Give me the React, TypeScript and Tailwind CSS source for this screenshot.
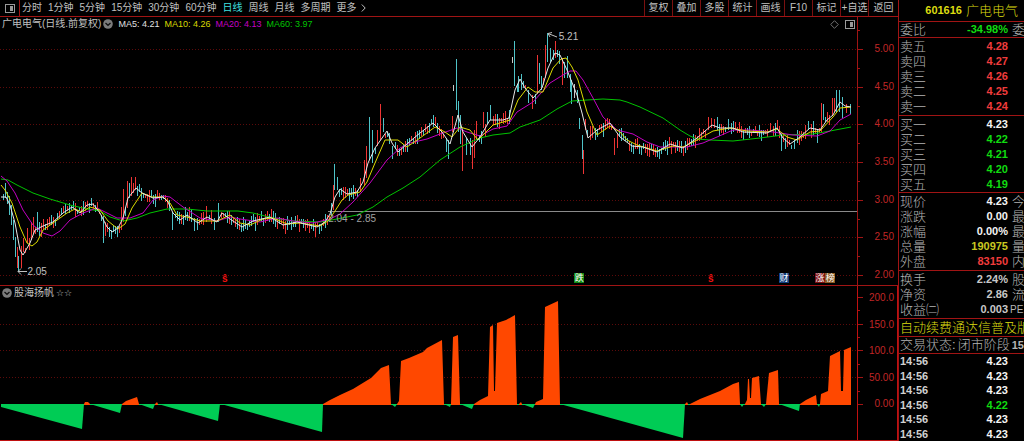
import React from "react";
import { clsx } from "clsx";

type Point = [number, number];
type Tone = "up" | "down" | "flat";

const PLOT_WIDTH = 857;

const ma5: Point[] = [
  [1, 197], [6, 197], [10, 205], [15, 223], [20, 250], [23, 255], [30, 243], [35, 230], [43, 226], [53, 222],
  [63, 213], [72, 207], [80, 213], [87, 205], [93, 204], [100, 213], [107, 227], [112, 232], [118, 228],
  [123, 218], [128, 198], [136, 188], [142, 193], [153, 198], [163, 197], [168, 202], [173, 213], [180, 220],
  [187, 215], [198, 223], [207, 217], [217, 222], [222, 213], [230, 219], [242, 227], [253, 221], [270, 217],
  [283, 225], [297, 222], [317, 227], [325, 222], [330, 214], [335, 197], [340, 189], [347, 194], [357, 192], [363, 182],
  [368, 163], [375, 148], [387, 131], [392, 143], [398, 152], [408, 143], [420, 133], [433, 123], [442, 132],
  [450, 144], [458, 115], [463, 132], [472, 147], [480, 137], [490, 120], [503, 120], [509, 118], [515, 90],
  [520, 79], [525, 88], [533, 98], [542, 88], [548, 68], [555, 53], [560, 55], [567, 70], [577, 95], [582, 113],
  [588, 138], [597, 130], [610, 123], [620, 137], [632, 146], [643, 147], [657, 152], [670, 144], [683, 148],
  [697, 138], [712, 125], [720, 128], [733, 128], [743, 132], [767, 133], [777, 128], [783, 138], [790, 144],
  [800, 137], [810, 128], [820, 130], [827, 120], [833, 115], [840, 102], [845, 106], [851, 107],
];

const ma10: Point[] = [
  [1, 185], [5, 190], [12, 203], [20, 227], [27, 243], [32, 246], [37, 242], [43, 230], [53, 223], [67, 213],
  [75, 209], [82, 212], [90, 207], [100, 210], [108, 221], [118, 229], [125, 224], [132, 208], [142, 193],
  [152, 197], [163, 197], [170, 203], [177, 215], [187, 217], [200, 221], [217, 221], [230, 215], [240, 223],
  [250, 225], [263, 219], [273, 218], [287, 224], [300, 223], [320, 226], [328, 221], [335, 211], [342, 200],
  [348, 195], [360, 192], [367, 182], [375, 163], [385, 140], [398, 140], [407, 147], [420, 138], [435, 127],
  [445, 132], [452, 137], [460, 127], [470, 130], [478, 140], [493, 125], [510, 120], [518, 100], [528, 87],
  [535, 92], [543, 92], [553, 68], [561, 59], [566, 58], [572, 67], [578, 80], [587, 112], [597, 135], [610, 126],
  [620, 132], [627, 140], [637, 145], [657, 151], [673, 146], [683, 147], [697, 140], [713, 131], [730, 128],
  [747, 131], [767, 132], [777, 129], [787, 137], [797, 140], [810, 132], [820, 131], [833, 117], [840, 108],
  [851, 107],
];

const ma20: Point[] = [
  [1, 176], [7, 181], [15, 193], [23, 210], [33, 225], [43, 233], [52, 236], [60, 231], [70, 220], [83, 213],
  [97, 208], [107, 213], [117, 218], [130, 218], [143, 213], [153, 200], [163, 196], [170, 197], [183, 207],
  [200, 218], [217, 221], [230, 217], [240, 219], [260, 222], [277, 218], [293, 221], [313, 223], [330, 219],
  [340, 214], [353, 202], [370, 183], [387, 160], [400, 148], [410, 143], [427, 139], [440, 134], [457, 128],
  [467, 132], [480, 136], [493, 129], [507, 126], [517, 112], [533, 102], [550, 83], [563, 75], [570, 71],
  [576, 71], [583, 80], [593, 98], [603, 117], [617, 130], [633, 134], [647, 142], [660, 147], [687, 147],
  [703, 143], [717, 137], [733, 130], [750, 130], [773, 132], [793, 135], [817, 136], [830, 131], [840, 120],
  [851, 114],
];

const ma60: Point[] = [
  [1, 179], [8, 180], [17, 185], [33, 193], [50, 199], [70, 205], [87, 209], [100, 211], [110, 217], [123, 221],
  [137, 218], [150, 213], [167, 209], [187, 209], [207, 211], [238, 211], [253, 213], [273, 218], [293, 221],
  [320, 222], [337, 219], [357, 215], [373, 207], [387, 197], [403, 188], [420, 177], [440, 160], [460, 147],
  [480, 138], [493, 135], [510, 133], [520, 127], [540, 120], [557, 109], [572, 101], [587, 100], [603, 99], [620, 100],
  [627, 102], [640, 107], [663, 118], [680, 130], [690, 136], [697, 139], [710, 140], [733, 141], [760, 138], [783, 135],
  [813, 134], [830, 131], [851, 127],
];

const majorBars: [number, number, number, Tone][] = [
  [5, 183, 198, "down"], [7, 192, 204, "down"], [9, 196, 215, "down"], [11, 205, 225, "down"], [13, 220, 240, "down"],
  [15, 237, 257, "down"], [17, 247, 268, "up"], [18, 256, 271, "down"], [21, 246, 268, "up"], [23, 238, 252, "up"],
  [27, 228, 243, "up"], [31, 222, 240, "up"], [33, 217, 234, "up"], [37, 212, 232, "down"], [39, 222, 236, "down"],
  [103, 216, 243, "down"], [105, 222, 236, "up"], [111, 230, 239, "down"], [121, 207, 230, "up"],
  [123, 189, 222, "up"], [127, 181, 208, "up"], [129, 183, 198, "down"], [131, 177, 196, "up"],
  [135, 177, 190, "up"], [157, 190, 198, "up"], [172, 212, 230, "down"], [194, 218, 231, "down"], [206, 206, 222, "up"],
  [218, 203, 222, "down"], [214, 218, 230, "down"], [333, 185, 210, "up"], [334, 164, 190, "down"], [337, 177, 190, "down"],
  [360, 178, 192, "up"], [364, 160, 185, "up"], [366, 146, 178, "up"], [369, 117, 160, "down"], [372, 130, 163, "down"],
  [377, 130, 146, "up"], [380, 104, 140, "up"], [383, 118, 132, "down"], [392, 146, 159, "down"], [446, 138, 152, "down"],
  [448, 140, 159, "down"], [452, 116, 132, "up"], [453, 85, 91, "flat"], [456, 59, 110, "down"], [458, 101, 132, "down"],
  [460, 115, 144, "down"], [462, 130, 171, "up"], [466, 138, 155, "down"], [470, 138, 155, "down"], [472, 140, 169, "up"],
  [474, 130, 158, "up"], [476, 121, 140, "up"], [483, 112, 128, "up"], [487, 112, 124, "down"], [490, 105, 120, "down"],
  [512, 57, 63, "flat"], [514, 41, 86, "down"], [517, 84, 92, "down"], [518, 76, 92, "down"], [521, 74, 90, "down"],
  [528, 90, 103, "down"], [532, 95, 109, "up"], [537, 55, 94, "up"], [539, 63, 84, "down"], [541, 76, 90, "down"],
  [545, 45, 78, "up"], [547, 33, 62, "down"], [550, 48, 62, "down"], [553, 50, 60, "down"], [555, 41, 58, "up"],
  [562, 58, 85, "up"], [564, 62, 78, "down"], [567, 56, 78, "down"], [570, 74, 92, "down"], [571, 80, 104, "down"],
  [574, 84, 98, "flat"], [579, 118, 129, "down"], [582, 135, 159, "down"], [583, 150, 174, "up"],
  [590, 126, 140, "up"], [592, 126, 138, "up"], [595, 128, 140, "down"], [614, 138, 155, "up"], [617, 134, 148, "up"],
  [641, 146, 155, "down"], [655, 148, 157, "up"], [683, 146, 156, "up"],
  [708, 117, 130, "up"], [714, 119, 128, "up"], [728, 119, 130, "down"], [770, 123, 132, "up"], [781, 134, 151, "down"],
  [785, 138, 149, "down"], [794, 140, 149, "down"], [808, 121, 130, "down"], [817, 130, 143, "down"], [821, 103, 132, "up"],
  [823, 104, 120, "down"], [827, 112, 122, "up"], [832, 98, 116, "up"], [834, 98, 112, "up"], [836, 90, 112, "down"],
  [839, 90, 112, "down"], [842, 97, 118, "down"], [846, 104, 113, "up"], [850, 104, 114, "down"],
];

const risingAreas: Point[][] = [
  [[84, 404], [85, 402], [88, 402], [90, 404]],
  [[122, 404], [126, 401], [137, 397], [139, 404]],
  [[155, 404], [157, 402], [158, 404]],
  [[323, 404], [330, 400], [340, 395], [353, 389], [371, 378], [381, 368], [389, 365], [391, 404]],
  [[397, 404], [399, 401], [401, 361], [409, 358], [423, 352], [427, 348], [442, 340], [444, 404]],
  [[451, 404], [453, 337], [458, 335], [460, 404]],
  [[474, 404], [480, 400], [488, 396], [490, 327], [493, 325], [494, 391], [495, 391], [497, 323], [506, 320], [515, 315], [517, 404]],
  [[519, 404], [521, 402], [522, 404]],
  [[535, 404], [536, 402], [543, 399], [545, 307], [558, 301], [560, 404]],
  [[685, 404], [687, 402], [688, 404]],
  [[690, 404], [700, 399], [720, 391], [733, 384], [739, 382], [740, 404]],
  [[745, 404], [747, 400], [748, 379], [749, 379], [750, 398], [751, 398], [752, 378], [759, 376], [761, 404]],
  [[766, 404], [769, 373], [778, 370], [779, 404]],
  [[800, 404], [806, 400], [816, 395], [817, 404]],
  [[820, 404], [821, 394], [828, 391], [830, 356], [840, 351], [841, 391], [843, 391], [844, 350], [851, 347], [851, 404]],
];

const fallingAreas: Point[][] = [
  [[1, 404], [1, 407], [82, 429], [84, 404]],
  [[90, 404], [120, 413], [122, 404]],
  [[139, 404], [153, 409], [155, 404]],
  [[158, 404], [218, 421], [220, 404]],
  [[221, 404], [322, 432], [323, 404]],
  [[391, 404], [395, 407], [397, 404]],
  [[444, 404], [450, 407], [451, 404]],
  [[460, 404], [472, 409], [474, 404]],
  [[522, 404], [533, 408], [535, 404]],
  [[560, 404], [683, 438], [685, 404]],
  [[740, 404], [742, 407], [744, 404]],
  [[761, 404], [764, 407], [766, 404]],
  [[779, 404], [799, 411], [800, 404]],
  [[817, 404], [819, 407], [820, 404]],
];

const toneColor: Record<Tone, string> = { up: "#ee3434", down: "#4fc3c8", flat: "#c8c8c8" };

const toPath = (points: Point[]) => points.map((p) => p.join(",")).join(" ");

function valueAt(points: Point[], x: number) {
  const i = Math.max(1, points.findIndex((p) => p[0] >= x));
  const [x0, y0] = points[i - 1];
  const [x1, y1] = points[i];
  return y0 + ((y1 - y0) * (x - x0)) / (x1 - x0);
}

function noise(n: number) {
  const v = Math.sin(n * 12.9898) * 43758.5453;
  return v - Math.floor(v);
}

function minorBars() {
  const bars: [number, number, number, Tone][] = [];
  for (let x = 3; x < 850; x += 2) {
    if (majorBars.some((b) => Math.abs(b[0] - x) < 2)) continue;
    const mid = valueAt(ma5, x) + (noise(x) - 0.5) * 7;
    const half = 2 + noise(x + 900) * 5;
    bars.push([x, Math.round(mid - half), Math.round(mid + half), noise(x + 77) > 0.5 ? "down" : "up"]);
  }
  return bars;
}

const bars = [...minorBars(), ...majorBars];

function GridLine({ y }: { y: number }) {
  return <line x1={0} x2={PLOT_WIDTH} y1={y + 0.5} y2={y + 0.5} stroke="#5c0a0a" strokeDasharray="1 2" />;
}

function PriceChart() {
  return (
    <svg viewBox="0 31 857 254" preserveAspectRatio="none" className="block h-[254px] w-full" aria-hidden="true">
      {[49, 87, 124, 162, 200, 237, 275].map((y) => (
        <GridLine key={y} y={y} />
      ))}
      <g shapeRendering="crispEdges">
        {bars.map(([x, top, bottom, tone]) => (
          <rect key={`${x}-${top}`} x={x} y={top} width={1} height={bottom - top} fill={toneColor[tone]} />
        ))}
      </g>
      <line x1={328} x2={PLOT_WIDTH} y1={211.5} y2={211.5} stroke="#8a8a8a" />
      <g fill="none" strokeWidth={1} strokeLinejoin="round">
        <polyline points={toPath(ma60)} stroke="#00c400" />
        <polyline points={toPath(ma20)} stroke="#c400c4" />
        <polyline points={toPath(ma10)} stroke="#dcdc00" />
        <polyline points={toPath(ma5)} stroke="#e8e8e8" />
      </g>
      <g fill="none" stroke="#c0c0c0">
        <path d="M27 271.5H18M21 268.5L18 271.5L21 274.5" />
        <path d="M557 37L548 33.5M552 32.5L548 33.5L550 37" />
      </g>
    </svg>
  );
}

function IndicatorChart() {
  return (
    <svg viewBox="0 300 857 140" preserveAspectRatio="none" className="block h-[140px] w-full" aria-hidden="true">
      {[324, 350, 377].map((y) => (
        <GridLine key={y} y={y} />
      ))}
      {fallingAreas.map((a) => (
        <polygon key={a[0][0]} points={toPath(a)} fill="#00cc55" />
      ))}
      {risingAreas.map((a) => (
        <polygon key={a[0][0]} points={toPath(a)} fill="#ff4800" />
      ))}
      <line x1={1} x2={851} y1={404.5} y2={404.5} stroke="#00cc55" />
      {risingAreas.map((a) => (
        <line key={a[0][0]} x1={a[0][0]} x2={a[a.length - 1][0]} y1={404.5} y2={404.5} stroke="#ff4800" />
      ))}
    </svg>
  );
}

function AxisTicks({ top, height, ticks, minor }: { top: number; height: number; ticks: number[]; minor: number[] }) {
  return (
    <svg viewBox={`0 ${top} 6 ${height}`} preserveAspectRatio="none" className="h-full w-1.5 shrink-0" aria-hidden="true">
      {ticks.map((y) => (
        <line key={y} x1={0} x2={5} y1={y + 0.5} y2={y + 0.5} stroke="#a01414" />
      ))}
      {minor.map((y) => (
        <line key={y} x1={0} x2={2} y1={y + 0.5} y2={y + 0.5} stroke="#a01414" />
      ))}
    </svg>
  );
}

function CollapseButton({ label }: { label: string }) {
  return (
    <button type="button" aria-label={label} className="shrink-0">
      <svg viewBox="0 0 10 10" className="block size-2.5" aria-hidden="true">
        <circle cx={5} cy={5} r={4.8} fill="#7c7c7c" />
        <path d="M2.5 4L5 6.3L7.5 4" fill="none" stroke="#111" strokeWidth={1.3} />
      </svg>
    </button>
  );
}

function PanelIcon() {
  return (
    <svg viewBox="0 0 10 9" className="block h-[9px] w-2.5" fill="none" stroke="#9a9a9a" aria-hidden="true">
      <rect x={0.5} y={0.5} width={9} height={8} />
      <rect x={5} y={2} width={3} height={5} fill="#9a9a9a" stroke="none" />
    </svg>
  );
}

const periods = ["分时", "1分钟", "5分钟", "15分钟", "30分钟", "60分钟", "日线", "周线", "月线", "多周期"];
const tools = ["复权", "叠加", "多股", "统计", "画线", "F10", "标记", "+自选", "返回"];

function Toolbar() {
  return (
    <nav className="flex h-[17px] items-stretch border-b border-[#a01414] text-[10px] leading-4 text-[#c0c0c0]">
      <button type="button" aria-label="侧栏" className="flex w-5 shrink-0 items-center justify-center border-r border-[#a01414]">
        <PanelIcon />
      </button>
      <div className="flex gap-1.5 whitespace-nowrap pl-0.5">
        {periods.map((p) => (
          <button key={p} type="button" className={clsx(p === "日线" && "text-[#40e0e0]")}>
            {p}
          </button>
        ))}
        <button type="button" className="flex items-center gap-1">
          更多
          <svg viewBox="0 0 5 8" className="h-2 w-[5px]" fill="none" stroke="#c0c0c0" aria-hidden="true">
            <path d="M0.8 0.5L4.2 4L0.8 7.5" />
          </svg>
        </button>
      </div>
      <div className="ml-auto flex whitespace-nowrap">
        {tools.map((t) => (
          <button key={t} type="button" className="w-7 border-l border-[#7a1010] text-center last:w-[30px]">
            {t}
          </button>
        ))}
      </div>
    </nav>
  );
}

const averages = [
  ["MA5: 4.21", "text-[#e0e0e0]"],
  ["MA10: 4.26", "text-[#d8d800]"],
  ["MA20: 4.13", "text-[#c400c4]"],
  ["MA60: 3.97", "text-[#00c400]"],
];

const badge = "absolute bottom-0.5 text-[9px] leading-[10px] w-2.5 text-center text-white";

function PricePanel() {
  return (
    <section className="flex border-b border-[#a01414]" aria-label="日线">
      <div className="relative min-w-0 flex-1">
        <header className="flex h-3.5 items-center whitespace-nowrap pl-0.5 pr-0.5 text-[10px] leading-[14px] text-[#c0c0c0]">
          <h1>广电电气(日线.前复权)</h1>
          <div className="ml-0.5 flex items-center gap-[5px]">
            <CollapseButton label="收起均线" />
            {averages.map(([text, color]) => (
              <span key={text} className={clsx("text-[9px]", color)}>
                {text}
              </span>
            ))}
          </div>
          <div className="ml-auto flex items-center gap-1.5">
            <svg viewBox="0 0 9 9" className="size-[9px]" fill="none" stroke="#707070" aria-hidden="true">
              <path d="M4.5 0.7L8.3 4.5L4.5 8.3L0.7 4.5Z" />
            </svg>
            <PanelIcon />
          </div>
        </header>
        <PriceChart />
        <span className="absolute left-[65.2%] top-3.5 text-[10px] leading-3 text-[#c0c0c0]">5.21</span>
        <span className="absolute left-[3.2%] top-[249px] text-[10px] leading-3 text-[#c0c0c0]">2.05</span>
        <span className="absolute left-[38.3%] top-[196px] text-[10px] leading-3 text-[#a0a0a0]">2.04 - 2.85</span>
        <span className="absolute bottom-0 left-[25.9%] text-[10px] font-bold leading-3 text-[#f01010]">ŝ</span>
        <span className="absolute bottom-0 left-[82.6%] text-[10px] font-bold leading-3 text-[#f01010]">ŝ</span>
        <span className={clsx(badge, "left-[67%] bg-[#128a12]")}>跌</span>
        <span className={clsx(badge, "left-[90.9%] bg-[#123c7c]")}>财</span>
        <span className={clsx(badge, "left-[95.1%] bg-[#7c1010]")}>涨</span>
        <span className={clsx(badge, "left-[96.3%] bg-[#8a5a24]")}>榜</span>
      </div>
      <aside className="flex w-[41px] border-l border-[#a01414]">
        <AxisTicks top={17} height={268} ticks={[49, 87, 124, 162, 200, 237, 275]} minor={[30, 68, 106, 143, 181, 219, 256]} />
        <ol className="flex flex-1 flex-col justify-between pb-1 pr-1 pt-[26px] text-right text-[10px] leading-3 text-[#c02626]">
          {["5.00", "4.50", "4.00", "3.50", "3.00", "2.50", "2.00"].map((v) => (
            <li key={v}>{v}</li>
          ))}
        </ol>
      </aside>
    </section>
  );
}

function IndicatorPanel() {
  return (
    <section className="flex border-b border-[#c01010]" aria-label="股海扬帆">
      <div className="min-w-0 flex-1">
        <header className="flex h-3.5 items-center gap-0.5 pl-0.5 text-[10px] leading-[14px] text-[#c0c0c0]">
          <CollapseButton label="收起指标" />
          <h2>股海扬帆</h2>
          <span className="font-['DejaVu_Sans'] text-[9px]">☆☆</span>
        </header>
        <IndicatorChart />
      </div>
      <aside className="flex w-[41px] border-x border-[#c01010]">
        <AxisTicks top={286} height={154} ticks={[297, 324, 350, 377, 404]} minor={[310, 337, 364, 391]} />
        <ol className="flex flex-1 flex-col justify-between pb-[30px] pr-[3px] pt-1.5 text-right text-[10px] leading-3 text-[#c02626]">
          {["200.0", "150.0", "100.0", "50.00", "0.00"].map((v) => (
            <li key={v}>{v}</li>
          ))}
        </ol>
      </aside>
    </section>
  );
}

type Row = { label: string; value: string; color: string; next?: string };

const red = "text-[#f03c3c]";
const green = "text-[#10dc10]";
const white = "text-[#f4f4f4]";
const silver = "text-[#c8c8c8]";

const ratio: Row[] = [{ label: "委比", value: "-34.98%", color: green, next: "委" }];
const asks: Row[] = [
  { label: "卖五", value: "4.28", color: red },
  { label: "卖四", value: "4.27", color: red },
  { label: "卖三", value: "4.26", color: red },
  { label: "卖二", value: "4.25", color: red },
  { label: "卖一", value: "4.24", color: red },
];
const bids: Row[] = [
  { label: "买一", value: "4.23", color: white },
  { label: "买二", value: "4.22", color: green },
  { label: "买三", value: "4.21", color: green },
  { label: "买四", value: "4.20", color: green },
  { label: "买五", value: "4.19", color: green },
];
const summary: Row[] = [
  { label: "现价", value: "4.23", color: white, next: "今" },
  { label: "涨跌", value: "0.00", color: white, next: "最" },
  { label: "涨幅", value: "0.00%", color: white, next: "最" },
  { label: "总量", value: "190975", color: "text-[#c8c820]", next: "量" },
  { label: "外盘", value: "83150", color: red, next: "内" },
];
const finance: Row[] = [
  { label: "换手", value: "2.24%", color: silver, next: "股" },
  { label: "净资", value: "2.86", color: silver, next: "流" },
  { label: "收益㈡", value: "0.003", color: silver, next: "PE" },
];

function QuoteTable({ rows, caption, className }: { rows: Row[]; caption: string; className?: string }) {
  return (
    <div className={clsx("border-b border-[#a01414]", className)}>
      <table aria-label={caption} className="w-full table-fixed border-collapse text-[13px] leading-[15px] text-[#b4b4b4]">
        <colgroup>
          <col className="w-10" />
          <col />
          <col className="w-4" />
        </colgroup>
        <tbody>
          {rows.map((r) => (
            <tr key={r.label} className="h-[15px]">
              <th scope="row" className="whitespace-nowrap p-0 pl-px text-left font-light">
                {r.label}
              </th>
              <td className={clsx("p-0 text-right text-[11px] font-bold", r.color)}>{r.value}</td>
              <td
                className={clsx(
                  "overflow-hidden whitespace-nowrap p-0 font-light",
                  r.next === "PE" ? "pl-0.5 text-[10px]" : "pl-1",
                )}
              >
                {r.next}
              </td>
            </tr>
          ))}
        </tbody>
      </table>
    </div>
  );
}

const trades = ["4.23", "4.23", "4.23", "4.22", "4.23", "4.23"];

function QuotePanel() {
  return (
    <aside className="flex w-[126px] shrink-0 flex-col overflow-hidden border-l border-[#a01414]">
      <h2 className="flex h-[22px] items-center justify-end gap-1 border-b border-[#a01414] pr-1.5 text-[13px] text-[#dcdc10]">
        <span className="text-[11px] font-bold">601616</span>
        <span className="font-light">广电电气</span>
      </h2>
      <QuoteTable rows={ratio} caption="委比" />
      <QuoteTable rows={asks} caption="卖盘" className="py-px" />
      <QuoteTable rows={bids} caption="买盘" className="pt-px" />
      <QuoteTable rows={summary} caption="行情" className="py-px" />
      <QuoteTable rows={finance} caption="财务" className="py-px" />
      <p className="h-[18px] overflow-hidden whitespace-nowrap border-b border-[#a01414] pl-px text-[13px] font-light leading-[17px] text-[#dcdc10]">
        自动续费通达信普及版
      </p>
      <p className="flex h-[17px] gap-0.5 overflow-hidden whitespace-nowrap border-b border-[#a01414] pl-px text-[13px] font-light leading-4 text-[#b4b4b4]">
        <span>交易状态:</span>
        <span>闭市阶段</span>
        <span className="text-[11px] font-bold">15</span>
      </p>
      <div className="flex-1">
        <table aria-label="成交明细" className="h-full w-full text-[11px] font-bold leading-[14px] text-[#f4f4f4]">
          <tbody>
            {trades.map((price, i) => (
              <tr key={i}>
                <td className="p-0 pl-px text-[#d0d0d0]">14:56</td>
                <td className={clsx("p-0 pr-4 text-right", price === "4.22" && green)}>{price}</td>
              </tr>
            ))}
          </tbody>
        </table>
      </div>
    </aside>
  );
}

export default function App() {
  return (
    <main className="flex bg-black font-['Liberation_Sans','Noto_Sans_CJK_SC',sans-serif]">
      <div className="min-w-0 flex-1">
        <Toolbar />
        <PricePanel />
        <IndicatorPanel />
      </div>
      <QuotePanel />
    </main>
  );
}
